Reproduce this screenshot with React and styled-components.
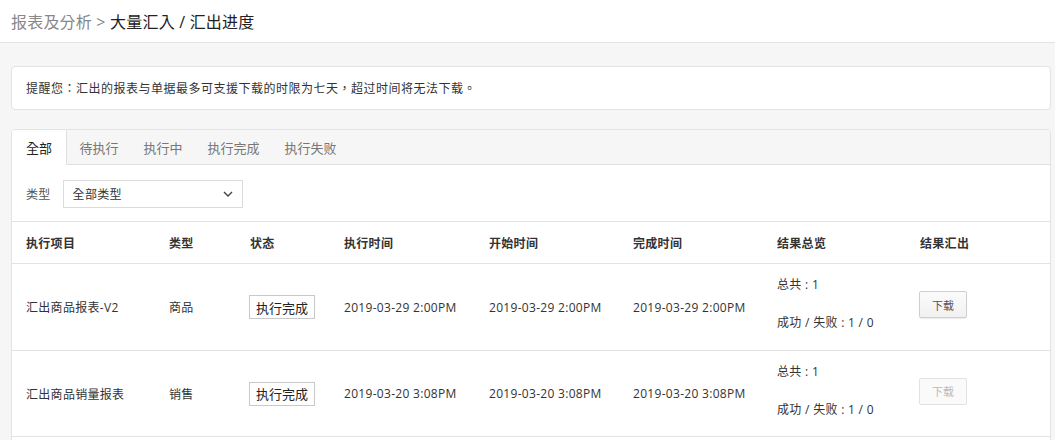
import React from "react";
import styled, { createGlobalStyle } from "styled-components";

const Global = createGlobalStyle`
  html, body { margin: 0; padding: 0; background: #f6f6f6; }
  body {
    font-family: "Open Sans", "Noto Sans CJK TC", sans-serif;
    color: #333;
    letter-spacing: 0.3px;
  }
  * { box-sizing: border-box; }
`;

const Page = styled.div`
  width: 1055px;
  min-height: 440px;
  background: #f6f6f6;
`;

const TopBar = styled.header`
  height: 43px;
  background: #fff;
  border-bottom: 1px solid #e3e3e3;
  display: flex;
  align-items: center;
  padding: 0 11px;
  font-size: 16px;
  letter-spacing: 0.2px;
`;

const Crumb = styled.span`
  color: ${(p) => (p.$current ? "#222" : "#888")};
  white-space: pre;
`;

const Content = styled.main`
  padding: 23px 4px 0 11px;
  display: flex;
  flex-direction: column;
  gap: 19px;
`;

const Notice = styled.div`
  height: 44px;
  background: #fff;
  border: 1px solid #e3e3e3;
  border-radius: 4px;
  display: flex;
  align-items: center;
  padding: 0 14px;
  font-size: 12px;
  letter-spacing: 0.5px;
  color: #333;
`;

const Card = styled.section`
  background: #fff;
  border: 1px solid #e3e3e3;
  border-radius: 4px 4px 0 0;
  overflow: hidden;
  padding-bottom: 20px;
`;

const TabBar = styled.nav`
  display: flex;
  height: 35px;
  background: #f6f6f6;
  border-bottom: 1px solid #e0e0e0;
  letter-spacing: 0;
`;

const Tab = styled.div`
  display: flex;
  align-items: center;
  padding: 0 ${(p) => (p.$active ? "14px" : "12.5px")};
  font-size: 13px;
  color: ${(p) => (p.$active ? "#222" : "#777")};
  background: ${(p) => (p.$active ? "#fff" : "transparent")};
  border-right: ${(p) => (p.$active ? "1px solid #e0e0e0" : "none")};
  margin-bottom: ${(p) => (p.$active ? "-1px" : "0")};
  height: ${(p) => (p.$active ? "35px" : "34px")};
`;

const FilterRow = styled.div`
  display: flex;
  align-items: center;
  gap: 12px;
  padding: 15px 14px 13px;
  font-size: 12px;
  color: #555;
`;

const Select = styled.div`
  width: 180px;
  height: 28px;
  border: 1px solid #dcdcdc;
  display: flex;
  align-items: center;
  justify-content: space-between;
  padding: 0 9px 0 9px;
  font-size: 12px;
  color: #333;
`;

const Row = styled.div`
  display: grid;
  grid-template-columns: 143px 81px 94px 145px 144px 144px 143px 1fr;
  border-top: 1px solid #e3e3e3;
  border-bottom: ${(p) => (p.$last ? "1px solid #e3e3e3" : "none")};
  height: ${(p) => (p.$head ? "42px" : "87px")};
  align-items: center;
`;

const Cell = styled.div`
  padding-left: 14px;
  font-size: 12px;
  font-weight: ${(p) => (p.$head ? 700 : 400)};
  color: #333;
  white-space: nowrap;
`;

const Summary = styled.div`
  padding-left: 14px;
  padding-bottom: 8px;
  display: flex;
  flex-direction: column;
  gap: 20px;
  font-size: 12px;
  color: #333;
`;

const Status = styled.span`
  display: inline-flex;
  align-items: center;
  height: 24px;
  margin-left: -1px;
  padding: 0 6px;
  border: 1px solid #c9c9c9;
  font-size: 13px;
  letter-spacing: 0;
  color: #222;
  background: #fff;
`;

const ButtonCell = styled.div`
  padding-left: 13px;
  padding-bottom: 5px;
`;

const DownloadButton = styled.button`
  width: 48px;
  height: 27px;
  border: 1px solid ${(p) => (p.disabled ? "#e2e2e2" : "#cfcfcf")};
  border-radius: 2px;
  background: ${(p) =>
    p.disabled ? "#fafafa" : "linear-gradient(#fbfbfb, #f1f1f1)"};
  box-shadow: ${(p) => (p.disabled ? "none" : "0 1px 1px rgba(0,0,0,0.08)")};
  font-family: "Open Sans", "Noto Sans CJK TC", sans-serif;
  font-size: 11px;
  color: ${(p) => (p.disabled ? "#bbb" : "#555")};
  padding: 0;
  cursor: ${(p) => (p.disabled ? "default" : "pointer")};
`;

const Chevron = () => (
  <svg width="10" height="6" viewBox="0 0 10 6" fill="none">
    <path d="M1 1l4 4 4-4" stroke="#444" strokeWidth="1.4" />
  </svg>
);

const headers = ["执行项目", "类型", "状态", "执行时间", "开始时间", "完成时间", "结果总览", "结果汇出"];

const rows = [
  { name: "汇出商品报表-V2", type: "商品", time: "2019-03-29 2:00PM", disabled: false },
  { name: "汇出商品销量报表", type: "销售", time: "2019-03-20 3:08PM", disabled: true },
];

const tabs = ["全部", "待执行", "执行中", "执行完成", "执行失败"];

export default function App() {
  return (
    <Page>
      <Global />
      <TopBar>
        <Crumb>报表及分析 &gt; </Crumb>
        <Crumb $current>大量汇入 / 汇出进度</Crumb>
      </TopBar>
      <Content>
        <Notice>提醒您：汇出的报表与单据最多可支援下载的时限为七天，超过时间将无法下载。</Notice>
        <Card>
          <TabBar>
            {tabs.map((t, i) => (
              <Tab key={t} $active={i === 0}>{t}</Tab>
            ))}
          </TabBar>
          <FilterRow>
            <span>类型</span>
            <Select>
              <span>全部类型</span>
              <Chevron />
            </Select>
          </FilterRow>
          <Row $head>
            {headers.map((h) => (
              <Cell key={h} $head>{h}</Cell>
            ))}
          </Row>
          {rows.map((r, i) => (
            <Row key={r.name} $last={i === rows.length - 1}>
              <Cell>{r.name}</Cell>
              <Cell>{r.type}</Cell>
              <Cell><Status>执行完成</Status></Cell>
              <Cell>{r.time}</Cell>
              <Cell>{r.time}</Cell>
              <Cell>{r.time}</Cell>
              <Summary>
                <span>总共 : 1</span>
                <span>成功 / 失败 : 1 / 0</span>
              </Summary>
              <ButtonCell>
                <DownloadButton disabled={r.disabled}>下载</DownloadButton>
              </ButtonCell>
            </Row>
          ))}
        </Card>
      </Content>
    </Page>
  );
}
